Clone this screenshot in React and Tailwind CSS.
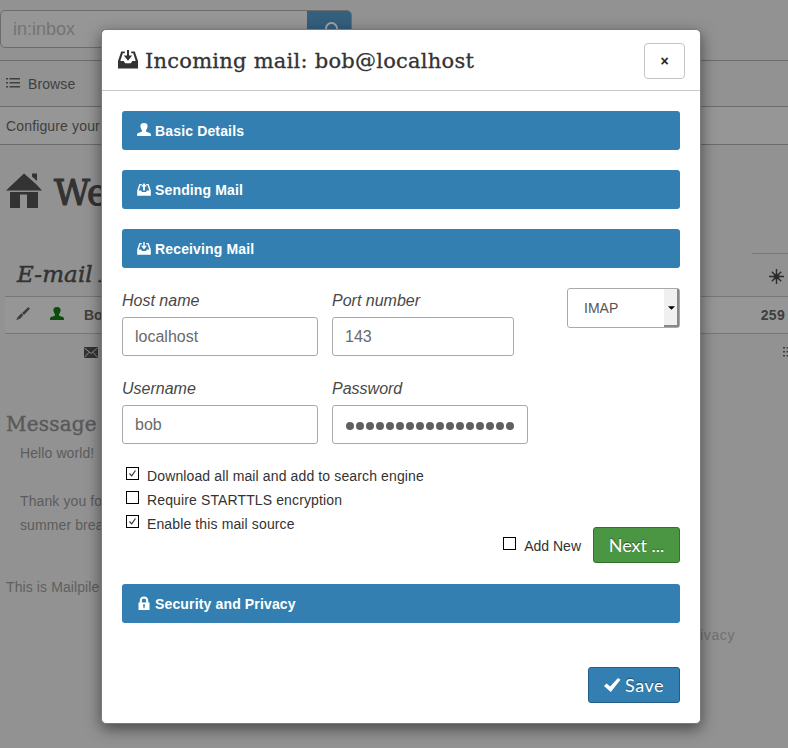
import React from "react";

const slab = "font-['DejaVu_Serif',serif]";

function UserIcon({ className }) {
  return (
    <svg viewBox="0 0 14 13" className={className} fill="currentColor">
      <path d="M7 0c2.800 0 3.700 1.400 3.600 3.300-.1 1.700-.9 3.200-1.600 3.900-.2.900.1 1.500.9 1.800l2.900 1c.9.3 1.200.9 1.200 3H0c0-2.100.3-2.700 1.200-3l2.900-1c.8-.3 1.100-.9.9-1.800-.7-.7-1.500-2.200-1.600-3.900C3.300 1.400 4.200 0 7 0z" />
    </svg>
  );
}

function InboxIcon({ className, up }) {
  return (
    <svg viewBox="0 0 20 19" className={className} fill="currentColor">
      <path d="M3.200 1.500h3.600v1.700H4.800L2.300 11h3.400l1.500 2.300h5.600L14.300 11h3.400l-2.500-7.800h-2V1.500h3.600L20 11v7.500H0V11z" />
      {up ? (
        <path d="M10 0l4 5h-2.700v6H8.700V5H6z" />
      ) : (
        <path d="M9 0h2v5.500h3.200L10 10.800 5.800 5.500H9z" />
      )}
    </svg>
  );
}

function LockIcon({ className }) {
  return (
    <svg viewBox="0 0 14 15" className={className} fill="currentColor">
      <path fillRule="evenodd" d="M1.500 6.500h1.300V4.600C2.800 2 4.500.5 7 .5s4.200 1.500 4.200 4.100v1.900h1.300V14h-11zM4.900 6.500h4.200V4.600C9.100 3.200 8.300 2.500 7 2.500s-2.100.7-2.100 2.100zM6 8.500v1.300l.4.500v2h1.200v-2l.4-.5V8.500z" />
    </svg>
  );
}

function ListIcon({ className }) {
  return (
    <svg viewBox="0 0 14 12" className={className} fill="currentColor">
      <path d="M0 1h2v1.400H0zM3.500 1H14v1.400H3.500zM0 5h2v1.400H0zM3.500 5H14v1.400H3.500zM0 9h2v1.400H0zM3.500 9H14v1.400H3.500z" />
    </svg>
  );
}

function Section({ icon, children }) {
  return (
    <div className="flex h-[39px] items-center gap-1 rounded-[3px] bg-[#337fb2] pl-[15px] text-[14px] font-bold tracking-[0.15px] text-white">
      {icon}
      <span className="pt-[2px]">{children}</span>
    </div>
  );
}

function Field({ label, value, width }) {
  return (
    <div className={width}>
      <div className="h-[29px] pt-px text-[16px] leading-[24px] text-[#484848] italic">{label}</div>
      <div className="flex h-[39px] items-center rounded-[3px] border border-[#a9a9a9] px-3 text-[16px] text-[#6a6a6a]">
        {value}
      </div>
    </div>
  );
}

function Check({ checked }) {
  return (
    <span className="flex h-[13px] w-[13px] shrink-0 items-center justify-center border border-black bg-white">
      {checked && (
        <svg viewBox="0 0 11 11" className="h-[11px] w-[11px]" fill="none" stroke="#333" strokeWidth="1.200">
          <path d="M2.500 5.500l2.200 2.300L8.500 2.500" />
        </svg>
      )}
    </span>
  );
}

function CheckRow({ checked, children }) {
  return (
    <div className="flex h-6 gap-2 pl-1 text-[14px] tracking-[0.125px] text-[#333]">
      <div className="pt-[3px]">
        <Check checked={checked} />
      </div>
      <span className="leading-[25px]">{children}</span>
    </div>
  );
}

function Page() {
  return (
    <div className="h-[748px] w-[788px] overflow-hidden text-[14px] whitespace-nowrap text-[#3f3f3f]">
      <div className="h-[61px] border-b border-[#6b6b6b] pt-[10px]">
        <div className="flex h-[38px] w-[352px] overflow-hidden rounded-[5px] border border-[#6c6c6c] bg-[#969696]">
          <div className="flex flex-1 items-center pl-3 text-[18px] text-[#737373]">in:inbox</div>
          <div className="flex w-[44px] justify-center bg-[#345f7d] pt-[11px]">
            <svg viewBox="0 0 16 16" className="ml-[6px] h-4 w-4" fill="none" stroke="#a5a5a5" strokeWidth="2">
              <circle cx="7.500" cy="6.500" r="5.500" />
              <path d="M11.500 10.500l3 3" />
            </svg>
          </div>
        </div>
      </div>
      <div className="flex h-[46px] items-center gap-2 border-b border-[#6b6b6b] pl-[6px] tracking-[0.1px]">
        <ListIcon className="mb-px h-3 w-[14px]" />
        <span className="pt-[2px]">Browse</span>
      </div>
      <div className="flex h-[38px] items-center border-b border-[#6b6b6b] bg-[#969696] pt-[2px] pl-[6px] tracking-[0.15px]">
        Configure your account
      </div>
      <div className="flex h-[108px] gap-[12px] pt-[25px] pl-[6px] text-[#333]">
        <svg viewBox="0 0 36 37" className="mt-[2px] h-[37px] w-9" fill="currentColor">
          <path d="M0 18.500L18 1.500l12.500 11 5.500 6zM26 1.500h5V9l-5-4.500zM4 20h28v16H21V22.500h-7V36H4z" />
        </svg>
        <h1 className={slab + " text-[35px] leading-[46px] [-webkit-text-stroke:1.2px_#333]"}>We</h1>
      </div>
      <div className="flex h-[43px] justify-between">
        <h2 className={slab + " pt-[4px] pl-[17px] text-[23px] leading-[34px] tracking-[0.1px] text-[#333] italic [-webkit-text-stroke:0.5px_#333]"}>
          E-mail Accounts
        </h2>
        <div className="w-9 border-t border-[#777] pt-[15px] pl-[17px]">
          <svg viewBox="0 0 16 16" className="h-[15px] w-[15px]" stroke="#2b2b2b" strokeWidth="1.500">
            <path d="M8 0v16M0 8h16M3 3l10 10M13 3L3 13" />
            <circle cx="8" cy="8" r="3" fill="#2b2b2b" stroke="none" />
          </svg>
        </div>
      </div>
      <div className="ml-[5px] flex h-[38px] items-center border-y border-[#777] bg-[#969696] pr-[3px] pl-[11px]">
        <svg viewBox="0 0 14 14" className="mb-[2px] h-[14px] w-[14px]" fill="currentColor">
          <path d="M12.300 0L14 1.700 8 8 6 6zM5.300 6.300l2 2-2.700 2.900C3.300 12.500 1.500 12 0 13.500 1 11.500 1 10.500 2.500 9.200z" />
        </svg>
        <UserIcon className="mb-[3px] ml-5 h-[13px] w-[14px] text-[#0b4d0b]" />
        <span className="ml-5 font-bold">Bob</span>
        <span className="ml-auto font-bold tracking-[0.3px]">259</span>
      </div>
      <div className="flex h-[36px] items-center justify-between pl-[84px]">
        <svg viewBox="0 0 14 11" className="h-[11px] w-[14px]">
          <path d="M0 0h14v11H0z" fill="#333" />
          <path d="M.5 1L7 6.500 13.500 1M.5 10.300l4.500-5M13.500 10.300l-4.500-5" fill="none" stroke="#929292" strokeWidth="1" />
        </svg>
        <ListIcon className="-mr-[9px] h-3 w-[14px]" />
      </div>
      <h3 className={slab + " mt-[39px] pl-[6px] text-[20px] leading-[30px] tracking-[0.2px] text-[#595959] [-webkit-text-stroke:0.4px_#595959]"}>
        Message
      </h3>
      <div className="pt-[2px] pl-5 leading-6 tracking-[0.1px] text-[#5c5c5c]">
        <p>Hello world!</p>
        <p className="pt-6">Thank you for trying</p>
        <p>summer break</p>
      </div>
      <div className="flex justify-between pt-[38px] pr-[53px] pl-[6px] leading-6 tracking-[0.1px] text-[#606060]">
        <span>This is Mailpile</span>
        <span className="pt-12 tracking-[0.6px] text-[#707070]">Privacy</span>
      </div>
    </div>
  );
}

export default function App() {
  return (
    <div className="relative h-[748px] w-[788px] overflow-hidden bg-[#929292] font-['Liberation_Sans',Arial,sans-serif]">
      <Page />
      <div className="absolute top-[29px] left-[101px] h-[695px] w-[600px] rounded-[5px] border border-[#7a7a7a] bg-white shadow-[0_5px_15px_rgba(0,0,0,0.5)]">
        <div className="flex h-[61px] items-center border-b border-[#c8c8c8] pt-[2px] pr-[15px] pl-4">
          <InboxIcon className="mb-[3px] h-[19px] w-5 text-[#333]" />
          <h2 className={slab + " ml-[7px] text-[21px] leading-8 tracking-[0.24px] whitespace-nowrap text-[#333] [-webkit-text-stroke:0.3px_#333]"}>
            Incoming mail: bob@localhost
          </h2>
          <button className="ml-auto h-9 w-[41px] rounded-[4px] border border-[#c4c4c4] text-[14px] leading-[34px] font-bold text-[#222]">
            ×
          </button>
        </div>
        <div className="px-5 pt-5">
          <div className="flex flex-col gap-5">
            <Section icon={<UserIcon className="mb-[2px] h-[13px] w-[14px]" />}>Basic Details</Section>
            <Section icon={<InboxIcon up className="mb-px h-[13px] w-[14px]" />}>Sending Mail</Section>
            <Section icon={<InboxIcon className="mb-px h-[13px] w-[14px]" />}>Receiving Mail</Section>
          </div>
          <div className="mt-5 flex">
            <div className="flex gap-[14px]">
              <Field label="Host name" value="localhost" width="w-[196px]" />
              <Field label="Port number" value="143" width="w-[182px]" />
            </div>
            <div className="ml-auto flex h-10 w-[113px] items-center rounded-[3px] border border-[#a9a9a9] pl-4 text-[14px] text-[#555]">
              IMAP
              <div className="ml-auto flex h-full w-[15px] items-center justify-center border-r-2 border-b-2 border-[#888] bg-[#f0f0f0]">
                <svg viewBox="0 0 8 4" className="mt-px ml-px h-1 w-[7px]">
                  <path d="M0 0h8L4 4z" />
                </svg>
              </div>
            </div>
          </div>
          <div className="mt-5 flex gap-[14px]">
            <Field label="Username" value="bob" width="w-[196px]" />
            <Field
              label="Password"
              width="w-[196px]"
              value={
                <span className="flex gap-[2px] pt-[3px] pl-[1px]">
                  {Array.from({ length: 17 }, (_, i) => (
                    <span key={i} className="h-2 w-2 shrink-0 rounded-full bg-[#606060]" />
                  ))}
                </span>
              }
            />
          </div>
          <div className="mt-5">
            <CheckRow checked>Download all mail and add to search engine</CheckRow>
            <CheckRow>Require STARTTLS encryption</CheckRow>
            <CheckRow checked>Enable this mail source</CheckRow>
          </div>
          <div className="-mt-[9px] flex h-9 justify-end gap-3">
            <div className="flex gap-2 pt-[7px] text-[14px] text-[#333]">
              <div className="pt-[3px]">
                <Check />
              </div>
              <span className="leading-[25px]">Add New</span>
            </div>
            <button className="w-[87px] rounded-[3px] border border-[#33702c] bg-[#4a9642] font-['Lato',sans-serif] text-[18px] leading-[34px] text-white [text-shadow:0_-1px_1px_rgba(0,0,0,0.4)]">
              Next ...
            </button>
          </div>
          <div className="mt-[21px]">
            <Section icon={<LockIcon className="mb-px h-[15px] w-[14px]" />}>Security and Privacy</Section>
          </div>
          <div className="mt-11 flex justify-end">
            <button className="flex h-9 w-[92px] items-center gap-1 rounded-[3px] border border-[#245d85] bg-[#337fb2] pl-[15px] font-['Lato',sans-serif] text-[18px] tracking-[0.5px] text-white [text-shadow:0_-1px_1px_rgba(0,0,0,0.4)]">
              <svg viewBox="0 0 17 14" className="h-[14px] w-[17px] shrink-0" fill="currentColor">
                <path d="M0 8l2.500-2.500L6.200 8.500 14 0l2.500 1.800L6.800 14z" />
              </svg>
              Save
            </button>
          </div>
        </div>
      </div>
    </div>
  );
}
